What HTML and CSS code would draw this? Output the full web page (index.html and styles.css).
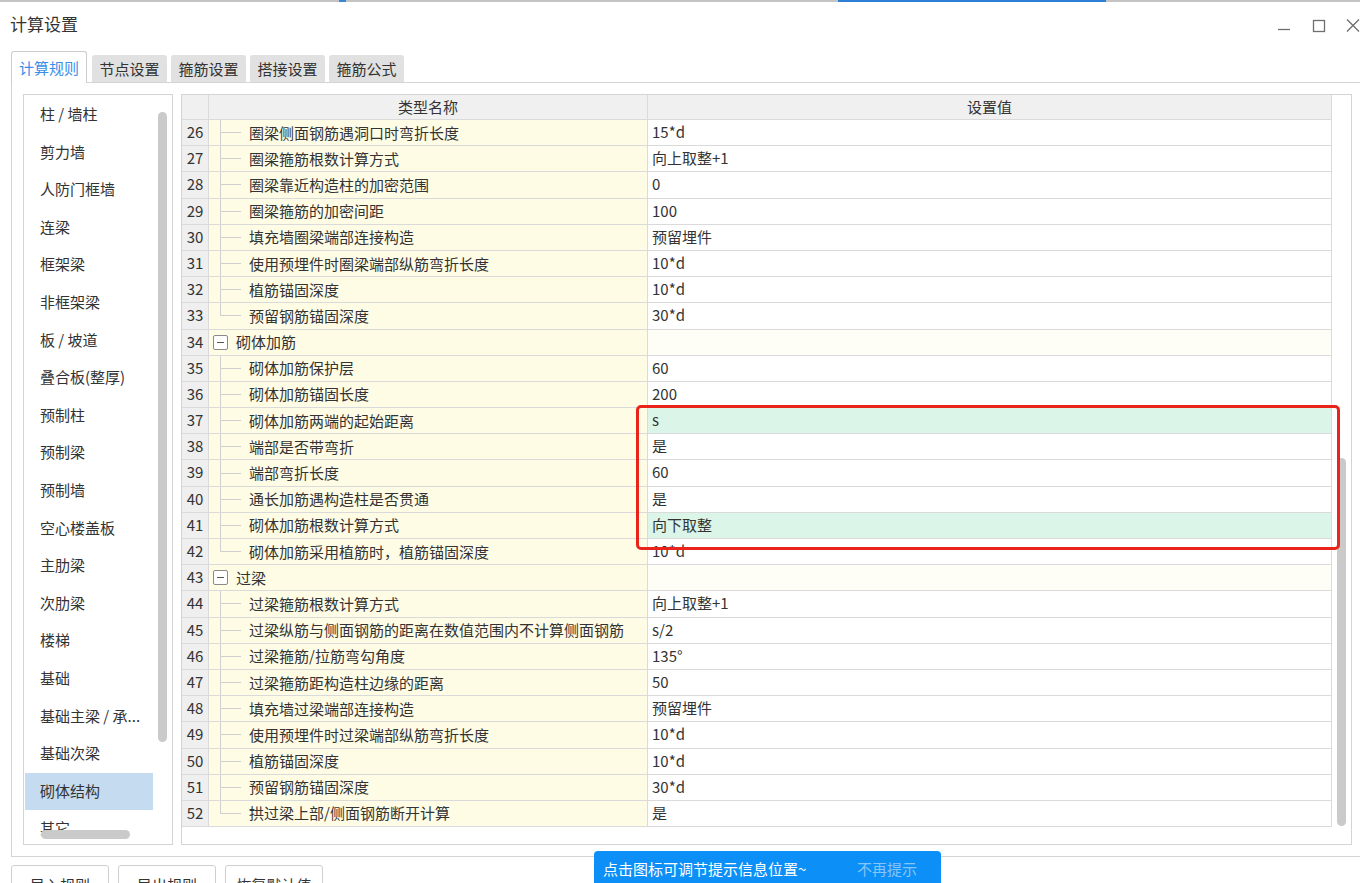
FILE: index.html
```html
<!DOCTYPE html>
<html lang="zh-CN">
<head>
<meta charset="utf-8">
<title>计算设置</title>
<link rel="stylesheet" href="styles.css">
</head>
<body>
<div class="topstrip"><span class="seg g1"></span><span class="seg b1"></span><span class="seg g2"></span><span class="seg b2"></span><span class="seg g3"></span></div>
<header class="titlebar">
  <h1 class="title">计算设置</h1>
  <svg class="winctl" width="90" height="20" viewBox="0 0 90 20">
    <line x1="8" y1="13.5" x2="20" y2="13.5" stroke="#6e6e6e" stroke-width="1.3"/>
    <rect x="43.5" y="4.5" width="11" height="11" fill="none" stroke="#6e6e6e" stroke-width="1.3"/>
    <path d="M77 3.5 L89 15.5 M89 3.5 L77 15.5" stroke="#6e6e6e" stroke-width="1.3" fill="none"/>
  </svg>
</header>
<nav class="tabs">
  <div class="tab active">计算规则</div>
  <div class="tab">节点设置</div>
  <div class="tab">箍筋设置</div>
  <div class="tab">搭接设置</div>
  <div class="tab">箍筋公式</div>
</nav>
<section class="panel">
  <aside class="catlist">
    <div class="item">柱 / 墙柱</div>
    <div class="item">剪力墙</div>
    <div class="item">人防门框墙</div>
    <div class="item">连梁</div>
    <div class="item">框架梁</div>
    <div class="item">非框架梁</div>
    <div class="item">板 / 坡道</div>
    <div class="item">叠合板(整厚)</div>
    <div class="item">预制柱</div>
    <div class="item">预制梁</div>
    <div class="item">预制墙</div>
    <div class="item">空心楼盖板</div>
    <div class="item">主肋梁</div>
    <div class="item">次肋梁</div>
    <div class="item">楼梯</div>
    <div class="item">基础</div>
    <div class="item">基础主梁 / 承...</div>
    <div class="item">基础次梁</div>
    <div class="item selected">砌体结构</div>
    <div class="item">其它</div>
    <div class="vthumb"></div>
    <div class="hthumb"></div>
  </aside>
  <div class="grid">
    <div class="tbl">
      <div class="row head"><div class="c num"></div><div class="c hname">类型名称</div><div class="c hval">设置值</div></div>
      <div class="row"><div class="c num">26</div><div class="c name"><span class="indent"></span><span class="branch"></span><span class="txt">圈梁侧面钢筋遇洞口时弯折长度</span></div><div class="c val">15*d</div></div>
      <div class="row"><div class="c num">27</div><div class="c name"><span class="indent"></span><span class="branch"></span><span class="txt">圈梁箍筋根数计算方式</span></div><div class="c val">向上取整+1</div></div>
      <div class="row"><div class="c num">28</div><div class="c name"><span class="indent"></span><span class="branch"></span><span class="txt">圈梁靠近构造柱的加密范围</span></div><div class="c val">0</div></div>
      <div class="row"><div class="c num">29</div><div class="c name"><span class="indent"></span><span class="branch"></span><span class="txt">圈梁箍筋的加密间距</span></div><div class="c val">100</div></div>
      <div class="row"><div class="c num">30</div><div class="c name"><span class="indent"></span><span class="branch"></span><span class="txt">填充墙圈梁端部连接构造</span></div><div class="c val">预留埋件</div></div>
      <div class="row"><div class="c num">31</div><div class="c name"><span class="indent"></span><span class="branch"></span><span class="txt">使用预埋件时圈梁端部纵筋弯折长度</span></div><div class="c val">10*d</div></div>
      <div class="row"><div class="c num">32</div><div class="c name"><span class="indent"></span><span class="branch"></span><span class="txt">植筋锚固深度</span></div><div class="c val">10*d</div></div>
      <div class="row"><div class="c num">33</div><div class="c name"><span class="indent"></span><span class="branch last"></span><span class="txt">预留钢筋锚固深度</span></div><div class="c val">30*d</div></div>
      <div class="row group"><div class="c num">34</div><div class="c name"><span class="gind"></span><span class="expander"><span class="minus"></span></span><span class="gtxt">砌体加筋</span></div><div class="c val"></div></div>
      <div class="row"><div class="c num">35</div><div class="c name"><span class="indent"></span><span class="branch"></span><span class="txt">砌体加筋保护层</span></div><div class="c val">60</div></div>
      <div class="row"><div class="c num">36</div><div class="c name"><span class="indent"></span><span class="branch"></span><span class="txt">砌体加筋锚固长度</span></div><div class="c val">200</div></div>
      <div class="row"><div class="c num">37</div><div class="c name"><span class="indent"></span><span class="branch"></span><span class="txt">砌体加筋两端的起始距离</span></div><div class="c val hl">s</div></div>
      <div class="row"><div class="c num">38</div><div class="c name"><span class="indent"></span><span class="branch"></span><span class="txt">端部是否带弯折</span></div><div class="c val">是</div></div>
      <div class="row"><div class="c num">39</div><div class="c name"><span class="indent"></span><span class="branch"></span><span class="txt">端部弯折长度</span></div><div class="c val">60</div></div>
      <div class="row"><div class="c num">40</div><div class="c name"><span class="indent"></span><span class="branch"></span><span class="txt">通长加筋遇构造柱是否贯通</span></div><div class="c val">是</div></div>
      <div class="row"><div class="c num">41</div><div class="c name"><span class="indent"></span><span class="branch"></span><span class="txt">砌体加筋根数计算方式</span></div><div class="c val hl">向下取整</div></div>
      <div class="row"><div class="c num">42</div><div class="c name"><span class="indent"></span><span class="branch last"></span><span class="txt">砌体加筋采用植筋时，植筋锚固深度</span></div><div class="c val">10*d</div></div>
      <div class="row group"><div class="c num">43</div><div class="c name"><span class="gind"></span><span class="expander"><span class="minus"></span></span><span class="gtxt">过梁</span></div><div class="c val"></div></div>
      <div class="row"><div class="c num">44</div><div class="c name"><span class="indent"></span><span class="branch"></span><span class="txt">过梁箍筋根数计算方式</span></div><div class="c val">向上取整+1</div></div>
      <div class="row"><div class="c num">45</div><div class="c name"><span class="indent"></span><span class="branch"></span><span class="txt">过梁纵筋与侧面钢筋的距离在数值范围内不计算侧面钢筋</span></div><div class="c val">s/2</div></div>
      <div class="row"><div class="c num">46</div><div class="c name"><span class="indent"></span><span class="branch"></span><span class="txt">过梁箍筋/拉筋弯勾角度</span></div><div class="c val">135°</div></div>
      <div class="row"><div class="c num">47</div><div class="c name"><span class="indent"></span><span class="branch"></span><span class="txt">过梁箍筋距构造柱边缘的距离</span></div><div class="c val">50</div></div>
      <div class="row"><div class="c num">48</div><div class="c name"><span class="indent"></span><span class="branch"></span><span class="txt">填充墙过梁端部连接构造</span></div><div class="c val">预留埋件</div></div>
      <div class="row"><div class="c num">49</div><div class="c name"><span class="indent"></span><span class="branch"></span><span class="txt">使用预埋件时过梁端部纵筋弯折长度</span></div><div class="c val">10*d</div></div>
      <div class="row"><div class="c num">50</div><div class="c name"><span class="indent"></span><span class="branch"></span><span class="txt">植筋锚固深度</span></div><div class="c val">10*d</div></div>
      <div class="row"><div class="c num">51</div><div class="c name"><span class="indent"></span><span class="branch"></span><span class="txt">预留钢筋锚固深度</span></div><div class="c val">30*d</div></div>
      <div class="row"><div class="c num">52</div><div class="c name"><span class="indent"></span><span class="branch last"></span><span class="txt">拱过梁上部/侧面钢筋断开计算</span></div><div class="c val">是</div></div>
    </div>
    <div class="vscroll"><div class="thumb"></div></div>
  </div>
</section>
<footer class="actions">
  <button class="btn">导入规则</button>
  <button class="btn">导出规则</button>
  <button class="btn">恢复默认值</button>
</footer>
<div class="redbox"></div>
<div class="toast"><span class="tmsg">点击图标可调节提示信息位置~</span><span class="tno">不再提示</span></div>
</body>
</html>
```
FILE: styles.css
```css
* { box-sizing: border-box; }
html, body { margin: 0; padding: 0; }
body {
  width: 1360px;
  height: 883px;
  overflow: hidden;
  position: relative;
  background: #fff;
  color: #333;
  font-family: "Noto Sans CJK SC", "Microsoft YaHei", "Noto Sans", sans-serif;
  font-size: 15px;
}

/* top strip */
.topstrip { display: flex; height: 2px; }
.seg { display: block; height: 2px; }
.g1 { width: 339px; background: #c4c4c4; }
.b1 { width: 7px; background: #3a86d6; }
.g2 { width: 492px; background: #c4c4c4; }
.b2 { width: 268px; background: #2c7fd2; }
.g3 { flex: 1; background: #c4c4c4; }

/* title bar */
.titlebar {
  height: 49px;
  display: flex;
  align-items: center;
  justify-content: space-between;
  padding-left: 10px;
}
.title {
  margin: 0;
  font-size: 17px;
  font-weight: normal;
  color: #333;
  line-height: 20px;
  padding-bottom: 5px;
}
.winctl { display: block; margin-top: -2px; }

/* tabs */
.tabs {
  display: flex;
  align-items: flex-end;
  gap: 4px;
  height: 31px;
  padding-left: 11px;
}
.tab {
  width: 75px;
  height: 27px;
  line-height: 27px;
  text-align: center;
  background: #e1e1e1;
  border-radius: 3px 3px 0 0;
  color: #333;
  font-size: 15px;
}
.tab.active {
  width: 76px;
  height: 32px;
  margin-right: 1px;
  margin-bottom: -1px;
  line-height: 31px;
  background: #fff;
  border: 1px solid #cdcdcd;
  border-bottom: none;
  color: #3b8fe5;
  position: relative;
  z-index: 1;
}

/* panel */
.panel {
  margin-left: 11px;
  height: 775px;
  border: 1px solid #d4d4d4;
  border-right: none;
  padding: 11px 0 11px 11px;
  display: flex;
  gap: 8px;
}

/* category list */
.catlist {
  position: relative;
  width: 150px;
  height: 751px;
  border: 1px solid #d4d4d4;
  padding-top: 1px;
  overflow: hidden;
}
.item {
  height: 37.6px;
  line-height: 36.6px;
  width: 128px;
  margin-left: 1px;
  padding-left: 15px;
  white-space: nowrap;
  color: #333;
  font-size: 15px;
}
.item.selected { background: #c5dbf0; }
.vthumb {
  position: absolute;
  left: 134px;
  top: 17px;
  width: 9px;
  height: 630px;
  border-radius: 5px;
  background: #cacaca;
}
.hthumb {
  position: absolute;
  left: 17px;
  top: 735px;
  width: 89px;
  height: 9px;
  border-radius: 5px;
  background: #cacaca;
}

/* grid table */
.grid {
  width: 1171px;
  height: 751px;
  border: 1px solid #d4d4d4;
  display: flex;
  overflow: hidden;
}
.tbl { width: 1150px; }
.row {
  display: grid;
  grid-template-columns: 27px 439px 684px;
  height: 26.2px;
}
.row.head { height: 25px; }
.c {
  border-right: 1px solid #dadada;
  border-bottom: 1px solid #dadada;
  white-space: nowrap;
  overflow: hidden;
  line-height: 24px;
}
.num {
  background: #efefef;
  text-align: center;
  color: #333;
}
.head .c { background: #f0f0f0; text-align: center; }
.name {
  background: #fffce6;
  display: flex;
  align-items: center;
}
.val {
  background: #fff;
  padding-left: 4px;
}
.val.hl { background: #dbf5e9; }
.group .val { background: #fffef6; }

.indent { width: 11px; flex: none; }
.branch {
  align-self: stretch;
  width: 21px;
  flex: none;
  border-left: 1px solid #cfcfcf;
  display: flex;
  align-items: center;
}
.branch::after {
  content: "";
  display: block;
  width: 20px;
  border-top: 1px solid #cfcfcf;
}
.branch.last { align-self: flex-start; height: 13px; align-items: flex-end; }
.txt { margin-left: 8px; }
.gind { width: 4px; flex: none; }
.expander {
  width: 15px;
  height: 15px;
  flex: none;
  border: 1px solid #8a8a8a;
  border-radius: 2px;
  background: #fff;
  display: flex;
  align-items: center;
  justify-content: center;
}
.minus { display: block; width: 7px; border-top: 1px solid #555; }
.gtxt { margin-left: 8px; }

.vscroll {
  width: 19px;
  padding-top: 363px;
  display: flex;
  justify-content: center;
}
.thumb {
  width: 9px;
  height: 368px;
  border-radius: 5px;
  background: #cacaca;
}

/* footer */
.actions {
  display: flex;
  gap: 9px;
  margin-top: 8px;
  padding-left: 11px;
}
.btn {
  width: 98px;
  height: 32px;
  border: 1px solid #cfcfcf;
  border-radius: 3px;
  background: #fff;
  color: #333;
  font-family: inherit;
  font-size: 15px;
  line-height: 34px;
  padding: 0;
  padding-top: 2px;
}

/* overlays */
.redbox {
  position: absolute;
  left: 636px;
  top: 405px;
  width: 704px;
  height: 145px;
  border: 3px solid #e8241b;
  border-radius: 5px;
}
.toast {
  position: absolute;
  left: 594px;
  top: 851px;
  width: 347px;
  height: 40px;
  background: #0c8ff6;
  border-radius: 4px 4px 0 0;
  padding-left: 9px;
  display: flex;
  align-items: flex-start;
  line-height: 36px;
  font-size: 15px;
}
.tmsg { width: 254px; color: #fff; }
.tno { color: #86c5f7; }
```
